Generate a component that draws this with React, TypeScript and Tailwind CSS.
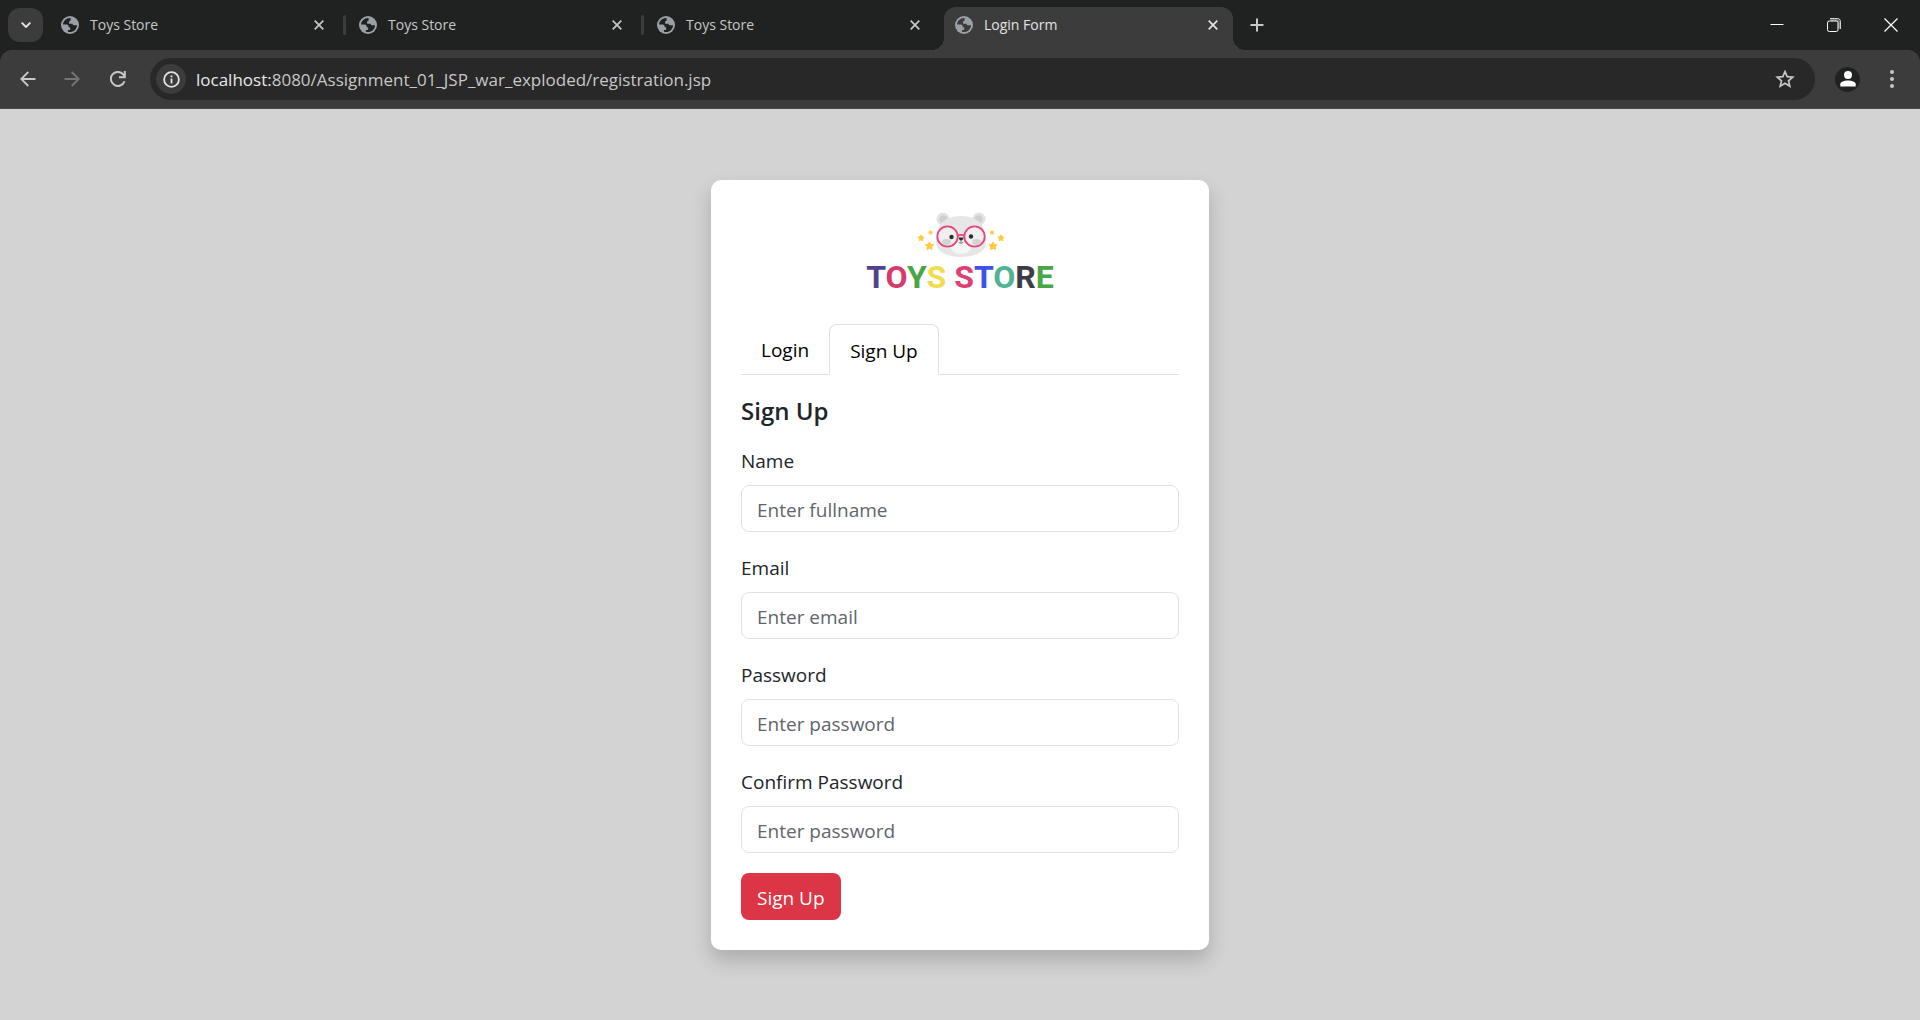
import type { ReactNode } from "react";

const OPEN_TABS = ["Toys Store", "Toys Store", "Toys Store"];

const FIELDS = [
  { id: "name", label: "Name", placeholder: "Enter fullname", type: "text" },
  { id: "email", label: "Email", placeholder: "Enter email", type: "email" },
  { id: "password", label: "Password", placeholder: "Enter password", type: "password" },
  { id: "confirm", label: "Confirm Password", placeholder: "Enter password", type: "password" },
];

const LOGO_LETTERS: [string, string][] = [
  ["T", "#4f4390"],
  ["O", "#d63b6b"],
  ["Y", "#4aa545"],
  ["S", "#f2dc4c"],
  [" ", "#ffffff"],
  ["S", "#de3f74"],
  ["T", "#3f51e8"],
  ["O", "#50b394"],
  ["R", "#3d3b45"],
  ["E", "#4aa545"],
];

function Globe({ land }: { land: string }) {
  return (
    <svg viewBox="0 0 18 18" className="size-[18px] shrink-0" aria-hidden="true">
      <circle cx="9" cy="9" r="9" fill="#9aa0a6" />
      <path
        fill={land}
        d="M9.6 2.1C5.6 1.8 2.2 4.900 2 8.600H5.400C7 8.600 7.600 9.400 7.600 10.600C7.600 11.500 8.200 11.700 9.200 11.700V13.300C9.200 13.800 8.900 14.100 8.300 14.100H6.900V15.700C11.700 17.100 15.900 13.700 16 9.200H12.900C11.900 9.200 11.600 8.600 11.600 7.800H8.100V6.300C8.100 5.300 8.700 4.800 9.600 4.800Z"
      />
    </svg>
  );
}

function CloseIcon() {
  return (
    <svg viewBox="0 0 10 10" className="size-[10px]" fill="none" stroke="currentColor" strokeWidth="1.7" aria-hidden="true">
      <path d="M0.700 0.700L9.300 9.300M9.300 0.700L0.700 9.300" />
    </svg>
  );
}

function BrowserTab({ title, active = false }: { title: string; active?: boolean }) {
  return (
    <div
      className={
        active
          ? "relative flex h-[43px] w-[289px] items-center rounded-t-xl bg-[#3c3c3c] pb-[7px] pl-[11px] pr-[10px] text-[#e3e3e3]"
          : "relative flex h-[43px] w-[289px] items-center pb-[7px] pl-[11px] pr-[10px] text-[#c7c7c7]"
      }
    >
      {active && (
        <>
          <span className="absolute bottom-0 right-full size-3 bg-[radial-gradient(circle_at_0_0,transparent_12px,#3c3c3c_12px)]" />
          <span className="absolute bottom-0 left-full size-3 bg-[radial-gradient(circle_at_100%_0,transparent_12px,#3c3c3c_12px)]" />
        </>
      )}
      <Globe land={active ? "#3c3c3c" : "#202221"} />
      <span className="ml-[11px] grow text-[14px] leading-5">{title}</span>
      <button type="button" aria-label="Close tab" className="grid size-5 place-items-center">
        <CloseIcon />
      </button>
    </div>
  );
}

function IconButton({ label, className, children }: { label: string; className: string; children: ReactNode }) {
  return (
    <button type="button" aria-label={label} className={className}>
      {children}
    </button>
  );
}

function TabStrip() {
  return (
    <div className="flex h-[50px] items-end bg-[#202221] pl-2">
      <IconButton label="Search tabs" className="mb-2 mr-[7px] grid h-[34px] w-[35px] shrink-0 place-items-center rounded-xl bg-[#3c3c3c] text-[#e3e3e3]">
        <svg viewBox="0 0 10 6" className="h-[6px] w-[10px]" fill="none" stroke="currentColor" strokeWidth="1.9" aria-hidden="true">
          <path d="M0.600 0.600L5 5L9.400 0.600" />
        </svg>
      </IconButton>
      {OPEN_TABS.map((title, i) => (
        <div key={i} className="flex items-center">
          <BrowserTab title={title} />
          <span className="flex w-[9px] justify-end pb-2 pr-[2px]">
            {i < 2 && <span className="h-5 w-[3px] rounded-full bg-[#3c3c3c]" />}
          </span>
        </div>
      ))}
      <BrowserTab title="Login Form" active />
      <IconButton label="New tab" className="mb-[10px] ml-[9px] grid size-[30px] place-items-center text-[#c7c7c7]">
        <svg viewBox="0 0 14 14" className="size-[14px]" fill="none" stroke="currentColor" strokeWidth="2" aria-hidden="true">
          <path d="M7 0.500V13.500M0.500 7H13.500" />
        </svg>
      </IconButton>
      <div className="ml-auto flex h-[50px] items-center text-white">
        <IconButton label="Minimize" className="grid h-full w-[57px] place-items-center">
          <svg viewBox="0 0 14 14" className="size-[14px]" aria-hidden="true">
            <path d="M0.500 6.500H13.500" stroke="currentColor" />
          </svg>
        </IconButton>
        <IconButton label="Restore" className="grid h-full w-[57px] place-items-center">
          <svg viewBox="0 0 14 14" className="size-[14px]" fill="none" stroke="currentColor" aria-hidden="true">
            <rect x="0.500" y="3" width="10.500" height="10.500" rx="1.800" />
            <path d="M3 0.700H10.500C12.400 0.700 13.300 1.600 13.300 3.500V11" />
            <path d="M3.500 2.200H10C11.400 2.200 11.900 2.800 11.900 4V10.500" opacity="0.550" />
          </svg>
        </IconButton>
        <IconButton label="Close window" className="grid h-full w-[58px] place-items-center">
          <svg viewBox="0 0 14 14" className="size-[14px]" fill="none" stroke="currentColor" strokeWidth="1.200" aria-hidden="true">
            <path d="M0.500 0.500L13.500 13.500M13.500 0.500L0.500 13.500" />
          </svg>
        </IconButton>
      </div>
    </div>
  );
}

function Toolbar() {
  return (
    <div className="bg-[#202221]">
      <div className="flex h-[59px] items-center rounded-t-xl border-b border-[#4a4a4a] bg-[#3c3c3c] pl-[13px] pr-[13px]">
        <IconButton label="Back" className="grid size-[30px] place-items-center text-[#c7c7c7]">
          <svg viewBox="0 0 16 16" className="size-4" fill="none" stroke="currentColor" strokeWidth="1.800" aria-hidden="true">
            <path d="M15.500 8H1.500M8.300 1L1.300 8L8.300 15" />
          </svg>
        </IconButton>
        <IconButton label="Forward" className="ml-[14px] grid size-[30px] place-items-center text-[#757575]">
          <svg viewBox="0 0 16 16" className="size-4" fill="none" stroke="currentColor" strokeWidth="1.800" aria-hidden="true">
            <path d="M0.500 8H14.500M7.700 1L14.700 8L7.700 15" />
          </svg>
        </IconButton>
        <IconButton label="Reload" className="ml-[16px] mr-[17px] grid size-[30px] place-items-center text-[#c7c7c7]">
          <svg viewBox="0 0 16 16" className="size-4" fill="none" stroke="currentColor" strokeWidth="2" aria-hidden="true">
            <path d="M14.500 10.200A7 7 0 1 1 13.600 3.900L14.600 5.200" />
            <path d="M14.800 0V6.200H9" />
          </svg>
        </IconButton>
        <div className="flex h-[42px] grow items-center rounded-full bg-[#282828] pl-[6px] pr-[15px]">
          <IconButton label="Site information" className="grid size-[30px] shrink-0 place-items-center rounded-full bg-[#3c3c3c] text-[#e3e3e3]">
            <svg viewBox="0 0 17 17" className="size-[17px]" fill="none" stroke="currentColor" strokeWidth="1.800" aria-hidden="true">
              <circle cx="8.500" cy="8.500" r="7.400" />
              <path d="M8.500 7.600V12.400M8.500 4.600V6.300" />
            </svg>
          </IconButton>
          <p className="ml-[10px] grow pt-0.5 text-[17px] leading-6 text-[#c7c7c7]">
            <span className="text-[#e8e8e8]">localhost:</span>8080/Assignment_01_JSP_war_exploded/registration.jsp
          </p>
          <IconButton label="Bookmark this page" className="grid size-[30px] place-items-center text-[#c7c7c7]">
            <svg viewBox="0 0 20 20" className="size-5" fill="none" stroke="currentColor" strokeWidth="1.700" aria-hidden="true">
              <path d="M10 2.600L12.200 7.700L17.700 8.200L13.500 11.800L14.800 17.200L10 14.300L5.200 17.200L6.500 11.800L2.300 8.200L7.800 7.700Z" />
            </svg>
          </IconButton>
        </div>
        <IconButton label="Profile" className="ml-5 grid size-[25px] place-items-center rounded-full bg-[#202221] text-white">
          <svg viewBox="0 0 16 16" className="size-4" fill="currentColor" aria-hidden="true">
            <circle cx="8" cy="4" r="4" />
            <path d="M0.300 15.500V13C0.300 10.600 4.500 9.400 8 9.400S15.700 10.600 15.700 13V15.500Z" />
          </svg>
        </IconButton>
        <IconButton label="Menu" className="ml-[17px] grid size-[30px] place-items-center text-[#c7c7c7]">
          <svg viewBox="0 0 4 18" className="h-[18px] w-1" fill="currentColor" aria-hidden="true">
            <circle cx="2" cy="2" r="2" />
            <circle cx="2" cy="9" r="2" />
            <circle cx="2" cy="16" r="2" />
          </svg>
        </IconButton>
      </div>
    </div>
  );
}

const STAR = "M0 -4L1.300 -1.600L4 -1.200L2.100 0.800L2.500 3.500L0 2.300L-2.500 3.500L-2.100 0.800L-4 -1.200L-1.300 -1.600Z";

function Bear() {
  return (
    <svg viewBox="0 0 90 46" className="h-[46px] w-[90px]" aria-hidden="true">
      <g fill="#e3e3e3">
        <circle cx="28" cy="7" r="6.500" />
        <circle cx="64" cy="7" r="6.500" />
      </g>
      <g fill="#cfcfcf">
        <circle cx="28.500" cy="7.500" r="4.200" />
        <circle cx="63.500" cy="7.500" r="4.200" />
      </g>
      <path
        fill="#e6e6e6"
        d="M46 4C58 4 67 9 69 18C70.500 24 71.500 29 70.500 33C69 41 58 45 46 45S23 41 21.500 33C20.500 29 21.500 24 23 18C25 9 34 4 46 4Z"
      />
      <ellipse cx="46" cy="35.500" rx="10" ry="6.500" fill="#f6f6f6" />
      <g fill="#efefef" stroke="#e8457f" strokeWidth="1.800">
        <circle cx="32.500" cy="24.500" r="10.200" />
        <circle cx="59.500" cy="24.500" r="10.200" />
        <path fill="none" d="M42.500 24C44 22.500 48 22.500 49.500 24" />
      </g>
      <g fill="#d3d3d3">
        <ellipse cx="31.500" cy="30" rx="4.500" ry="3" />
        <ellipse cx="61.500" cy="30" rx="4.500" ry="3" />
      </g>
      <g fill="#2d2d33">
        <circle cx="36.500" cy="25" r="2.200" />
        <circle cx="56" cy="24.500" r="2.200" />
        <path d="M43.800 25.500H48.400C48.400 27.500 47.300 28.300 46.100 28.300S43.800 27.500 43.800 25.500Z" />
      </g>
      <path d="M46 28V30.500M43.800 30C44.300 31.600 47.700 31.600 48.300 30" fill="none" stroke="#55555c" strokeWidth="0.800" />
      <g fill="#fccb3c" stroke="#fccb3c" strokeLinejoin="round">
        <path transform="translate(6 26) scale(0.800)" d={STAR} />
        <path transform="translate(15.500 20.500) scale(0.550)" d={STAR} />
        <path transform="translate(14.500 34)" d={STAR} />
        <path transform="translate(86 26) scale(0.800)" d={STAR} />
        <path transform="translate(77 20.500) scale(0.550)" d={STAR} />
        <path transform="translate(78 34)" d={STAR} />
      </g>
    </svg>
  );
}

export default function App() {
  return (
    <div className="flex min-h-screen flex-col bg-[#d3d3d3] font-['Open_Sans',sans-serif]">
      <header>
        <TabStrip />
        <Toolbar />
      </header>
      <main className="flex grow justify-center px-4 py-[71px]">
        <section className="w-full max-w-[498px] self-start rounded-[10px] bg-white p-[30px] shadow-[0_10px_20px_rgba(0,0,0,0.19)]">
          <div className="flex flex-col items-center pt-0.5">
            <Bear />
            <p className="whitespace-pre font-['Roboto',sans-serif] text-[32px] font-bold leading-[38px]">
              {LOGO_LETTERS.map(([letter, color], i) => (
                <span key={i} style={{ color }}>
                  {letter}
                </span>
              ))}
            </p>
          </div>
          <nav className="mt-7 flex h-[51px] border-b border-[#dee2e6] text-[19px] leading-8 text-black">
            <a href="#login" className="px-5 py-[10px]">
              Login
            </a>
            <a href="#signup" aria-current="page" className="-mb-px rounded-t-lg border border-b-0 border-[#dee2e6] bg-white px-5 pt-[10px]">
              Sign Up
            </a>
          </nav>
          <form className="pt-5" onSubmit={(e) => e.preventDefault()}>
            <h1 className="mb-[18px] text-[24px] font-semibold leading-8 text-[#212529]">Sign Up</h1>
            {FIELDS.map((f) => (
              <div key={f.id} className="mb-5">
                <label htmlFor={f.id} className="mb-2 block text-[19px] leading-8 text-[#212529]">
                  {f.label}
                </label>
                <input
                  id={f.id}
                  type={f.type}
                  placeholder={f.placeholder}
                  className="block h-[47px] w-full rounded-lg border border-[#dee2e6] bg-white px-[15px] pt-0.5 text-[19px] text-[#212529] placeholder:text-[#5f656b]"
                />
              </div>
            ))}
            <button type="submit" className="block h-[47px] rounded-lg bg-[#dc3545] px-4 pt-0.5 text-[19px] leading-[30px] text-white">
              Sign Up
            </button>
          </form>
        </section>
      </main>
    </div>
  );
}
